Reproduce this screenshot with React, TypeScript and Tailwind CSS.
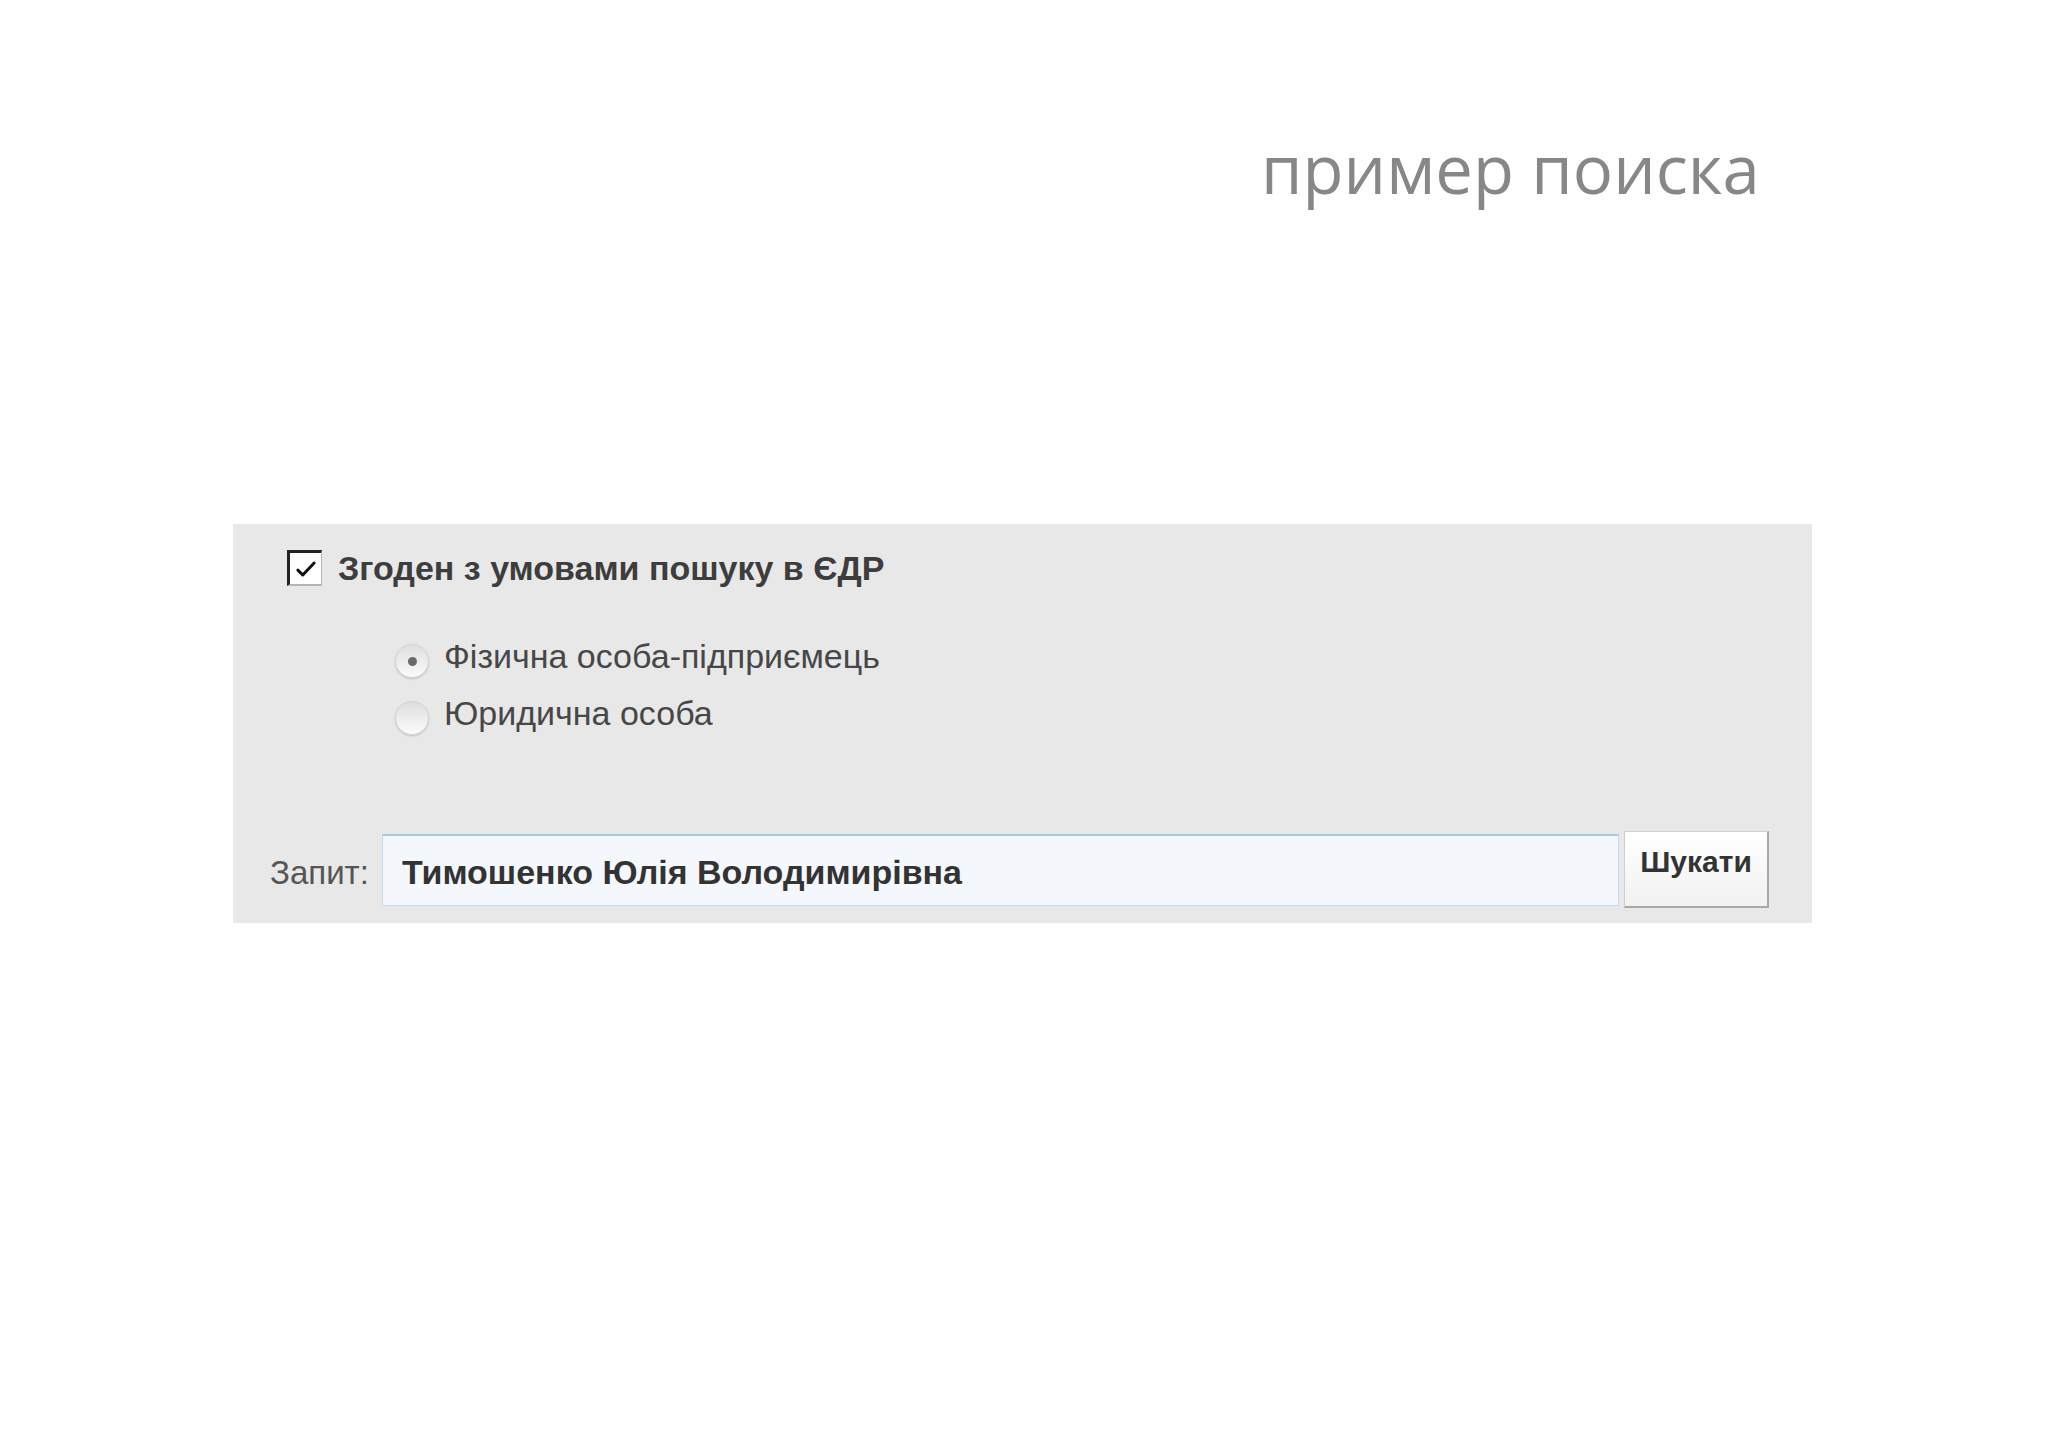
import { useState } from "react";

const sans = "font-['Liberation_Sans','Helvetica','Arial',sans-serif]";

const Radio = ({ checked, label, onClick }: { checked: boolean; label: string; onClick: () => void }) => (
  <button type="button" onClick={onClick} className="flex items-start gap-[15px] text-left">
    <span className="mt-[5px] flex h-[34px] w-[34px] items-center justify-center rounded-full border border-[#d4d4d4] bg-linear-to-b from-[#dedede] to-[#fbfbfb] shadow-[0_1px_2px_rgba(0,0,0,0.18)]">
      {checked && <span className="h-[9px] w-[9px] rounded-full bg-[#6a6a6a]" />}
    </span>
    <span className={`${sans} text-[34px] leading-none text-[#474747]`}>{label}</span>
  </button>
);

export default function App() {
  const [agreed, setAgreed] = useState(true);
  const [kind, setKind] = useState<"fop" | "ul">("fop");
  const [query, setQuery] = useState("Тимошенко Юлія Володимирівна");

  return (
    <div className="h-[1447px] w-full bg-white">
      <div className="h-[524px] pl-[1261px] pt-[135px]">
        <h1 className="font-['Open_Sans','Noto_Sans',sans-serif] text-[67px] leading-none font-normal text-[#878787]">
          пример поиска
        </h1>
      </div>

      <div className="ml-[233px] flex h-[399px] w-[1579px] flex-col bg-[#e8e8e8] pl-[54px] pt-[26px]">
        <button type="button" onClick={() => setAgreed(!agreed)} className="flex items-center gap-[16px] text-left">
          <span className="flex h-[36px] w-[35px] items-center justify-center border-t-[3px] border-l-[3px] border-r border-b-2 border-t-[#222] border-l-[#222] border-r-[#b4b4b4] border-b-[#b4b4b4] bg-white">
            {agreed && (
              <svg viewBox="0 0 24 24" className="h-[26px] w-[26px]" fill="none" stroke="#111" strokeWidth="2.8" strokeLinecap="round" strokeLinejoin="round">
                <path d="M4.5 13l4.5 4.5L19.5 6.5" />
              </svg>
            )}
          </span>
          <span className={`${sans} text-[34px] leading-none font-bold text-[#3d3d3d]`}>Згоден з умовами пошуку в ЄДР</span>
        </button>

        <div className="ml-[108px] mt-[53px] flex flex-col gap-[18px]">
          <Radio checked={kind === "fop"} label="Фізична особа-підприємець" onClick={() => setKind("fop")} />
          <Radio checked={kind === "ul"} label="Юридична особа" onClick={() => setKind("ul")} />
        </div>

        <div className="-ml-[17px] mt-[96px] flex items-center">
          <span className={`${sans} w-[112px] pt-[6px] text-[33px] leading-none text-[#555]`}>Запит:</span>
          <input
            value={query}
            onChange={(e) => setQuery(e.target.value)}
            className={`${sans} h-[72px] w-[1237px] border border-[#c4dbee] border-t-2 border-t-[#a6c9e6] bg-[#f4f8fd] pl-[19px] pt-[4px] text-[34px] font-bold text-[#333] outline-none`}
          />
          <button
            type="button"
            className={`${sans} ml-[5px] flex h-[77px] w-[145px] items-start justify-center border border-[#cfcfcf] border-r-2 border-b-2 border-r-[#a9a9a9] border-b-[#a9a9a9] bg-linear-to-b from-white to-[#f1f1f1] pt-[15px] text-[30px] leading-none font-bold text-[#333]`}
          >
            Шукати
          </button>
        </div>
      </div>
    </div>
  );
}
